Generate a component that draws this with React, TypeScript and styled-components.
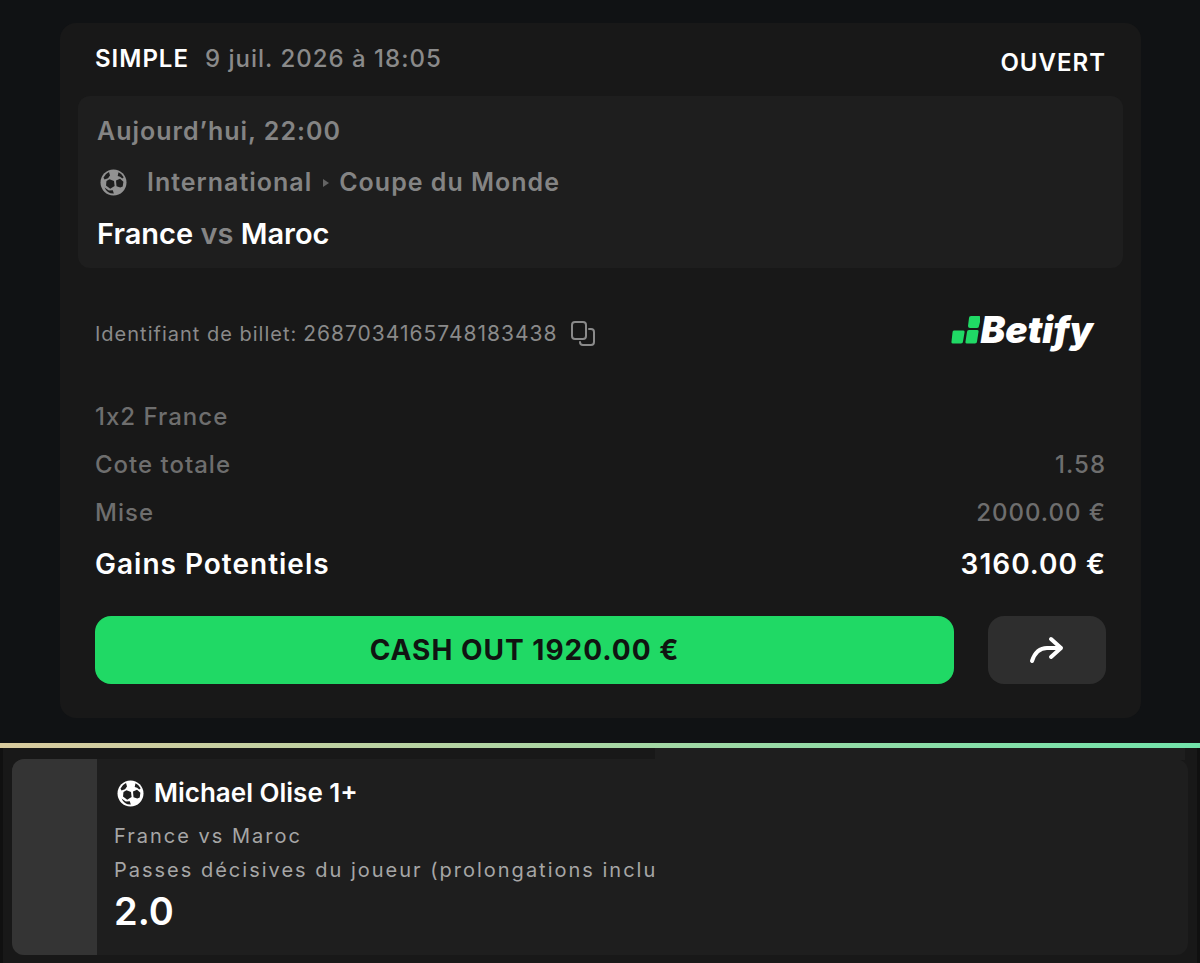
import React from 'react';
import styled, { createGlobalStyle } from 'styled-components';

const GlobalStyle = createGlobalStyle`
  *, *::before { box-sizing: border-box; }
  body {
    margin: 0;
    background: #101214;
    color: #fff;
    font-family: Inter, "Liberation Sans", sans-serif;
  }
  p, h2, dl, dd, dt { margin: 0; font-weight: inherit; }
  button { font-family: inherit; border: 0; padding: 0; cursor: pointer; }
`;

const Ticket = styled.article`
  margin: 23px 59px 25px 60px;
  padding: 18px 18px 34px;
  border-radius: 16px;
  background: #181818;
`;

const TicketHeader = styled.header`
  display: flex;
  justify-content: space-between;
  align-items: flex-end;
  padding: 0 17px;
  margin-bottom: 16px;
`;

const Heading = styled.div`
  display: flex;
  gap: 16px;
  padding-bottom: 4px;
`;

const Label = styled.p<{ $tone?: string; $weight?: number }>`
  display: flex;
  align-items: center;
  font-size: 24px;
  line-height: 35px;
  letter-spacing: 1px;
  font-weight: ${(p) => p.$weight ?? 500};
  color: ${(p) => p.$tone ?? '#8a8a8a'};
`;

const MatchPanel = styled.section`
  display: flex;
  flex-direction: column;
  gap: 16px;
  padding: 18px 19px 17px;
  border-radius: 12px;
  background: #1e1e1e;
`;

const MatchInfo = styled(Label)`
  font-size: 25px;
  font-weight: 600;
  color: #848484;
  svg { margin: 0 20px 0 3px; color: #929292; }
`;

const Chevron = styled.span`
  width: 0;
  margin: 0 10px 0 11px;
  border-left: 6px solid #646464;
  border-top: 4px solid transparent;
  border-bottom: 4px solid transparent;
`;

const Teams = styled.h2`
  font-size: 29px;
  line-height: 35px;
  font-weight: 600;
  span { color: #858585; }
`;

const Reference = styled.div`
  display: flex;
  justify-content: space-between;
  align-items: flex-end;
  margin: 40px 30px 49px 17px;
`;

const TicketId = styled.p`
  display: flex;
  align-items: center;
  gap: 6px;
  padding-bottom: 2px;
  font-size: 20px;
  line-height: 32px;
  letter-spacing: 1px;
  color: #8a8a8a;
`;

const TicketNumber = styled.span`
  font-size: 21px;
`;

const CopyButton = styled.button`
  display: flex;
  margin-left: 6px;
  background: none;
  color: #8a8a8a;
`;

const Brand = styled.div`
  display: flex;
  align-items: center;
  font: italic 900 37px/44px Inter, sans-serif;
`;

const Amounts = styled.dl`
  display: flex;
  flex-direction: column;
  gap: 16px;
  padding: 0 17px;
`;

const AmountRow = styled.div<{ $strong?: boolean }>`
  display: flex;
  justify-content: space-between;
  font-size: ${(p) => (p.$strong ? 28 : 24)}px;
  line-height: ${(p) => (p.$strong ? 38 : 32)}px;
  letter-spacing: 1px;
  font-weight: ${(p) => (p.$strong ? 600 : 500)};
  color: ${(p) => (p.$strong ? '#fff' : '#6e6e6e')};
`;

const Actions = styled.div`
  display: flex;
  gap: 34px;
  padding: 0 17px;
  margin-top: 33px;
`;

const CashOut = styled.button`
  flex: 1;
  height: 68px;
  border-radius: 16px;
  background: #20d965;
  color: #101411;
  font-size: 28px;
  letter-spacing: 1px;
  font-weight: 700;
`;

const Share = styled.button`
  display: flex;
  align-items: center;
  justify-content: center;
  width: 118px;
  border-radius: 16px;
  background: #2e2e2e;
  color: #fff;
`;

const Divider = styled.div`
  height: 5px;
  background: linear-gradient(90deg, #d9cb9f, #a8d6a4 50%, #72e4ab);
`;

const SelectionArea = styled.section`
  position: relative;
  padding: 11px 9px 8px;
  border: solid #101010;
  border-width: 0 3px;
  background: #181818;
  &::before {
    content: '';
    position: absolute;
    top: 0;
    left: 652px;
    right: 12px;
    height: 12px;
    background: #1e1e1e;
  }
`;

const Selection = styled.article`
  display: flex;
  border-radius: 12px;
  overflow: hidden;
  background: #1e1e1e;
`;

const Swatch = styled.div`
  width: 85px;
  background: #343434;
`;

const Pick = styled.div`
  padding: 16px 17px 20px;
`;

const Player = styled.h2`
  display: flex;
  align-items: center;
  gap: 10px;
  padding-left: 3px;
  margin-bottom: 8px;
  font-size: 26px;
  line-height: 36px;
  font-weight: 600;
`;

const Detail = styled.p`
  font-size: 20px;
  line-height: 34px;
  letter-spacing: 2px;
  color: #a6a6a6;
`;

const Odds = styled.p`
  font-size: 38px;
  line-height: 48px;
  font-weight: 600;
`;

const Ball = () => (
  <svg width="27" height="27" viewBox="0 0 27 27" aria-hidden="true">
    <circle cx="13.5" cy="13.5" r="13" fill="currentColor" />
    <g fill="#1e1e1e">
      <path d="M9.5 10.2 14 12l.6 5-4.4 2.8L6 16.5l.5-4.6z" />
      <path d="m16 11.6 4-1.8 3.4 3-.7 4.6-2.4 1-3.8-1.2z" />
      <path d="M3.5 8.5Q5.500 4.500 9 3l1 3.500-2 2.800L4.500 10.500z" />
      <path d="M18.500 3.200q3.500 1.500 5.200 5l-1.400 1.400-2.200-1.800-2.400-.8z" />
      <path d="m4.500 18.500 4.300 3 4-.2 1 3.200q-6.500.3-9.300-6z" />
    </g>
  </svg>
);

const CopyIcon = () => (
  <svg width="26" height="26" viewBox="0 0 26 26" fill="none" stroke="currentColor" strokeWidth="2" strokeLinecap="round" aria-hidden="true">
    <rect x="2" y="1" width="14" height="17" rx="3" />
    <path d="M19 8h2q3 0 3 3v10q0 3-3 3h-8q-3 0-3-3" />
  </svg>
);

const ShareIcon = () => (
  <svg width="36" height="28" viewBox="0 0 36 28" fill="none" stroke="currentColor" strokeWidth="4" strokeLinecap="round" strokeLinejoin="round" aria-hidden="true">
    <path d="M3 25C6 16 11 12 18 12h14M22 3l10 9-10 9" />
  </svg>
);

const BrandMark = () => (
  <svg width="29" height="28" viewBox="0 0 29 28" fill="#20d965" aria-hidden="true">
    <path d="M20 0h8q2 0 2 2l-2 8q0 2-2 2h-7q-2 0-2-2l1-8q0-2 2-2zM3 14.500h9q2 0 1.500 2l-1.500 9q0 2-2 2H2q-2 0-1.500-2l1-9q0-2 1.500-2zM18 14h8q2 0 1.500 2l-1.500 9.500q0 2-2 2h-8q-2 0-1.500-2l1.500-9.500q0-2 2-2z" />
  </svg>
);

export default function App() {
  return (
    <main>
      <GlobalStyle />
      <Ticket>
        <TicketHeader>
          <Heading>
            <Label $tone="#fff" $weight={600}>SIMPLE</Label>
            <Label>9 juil. 2026 à 18:05</Label>
          </Heading>
          <Label $tone="#fff" $weight={600}>OUVERT</Label>
        </TicketHeader>
        <MatchPanel>
          <MatchInfo>Aujourd’hui, 22:00</MatchInfo>
          <MatchInfo>
            <Ball />International<Chevron />Coupe du Monde
          </MatchInfo>
          <Teams>France <span>vs</span> Maroc</Teams>
        </MatchPanel>
        <Reference>
          <TicketId>
            Identifiant de billet: <TicketNumber>2687034165748183438</TicketNumber>
            <CopyButton aria-label="Copier"><CopyIcon /></CopyButton>
          </TicketId>
          <Brand><BrandMark />Betify</Brand>
        </Reference>
        <Amounts>
          <AmountRow><dt>1x2 France</dt></AmountRow>
          <AmountRow><dt>Cote totale</dt><dd>1.58</dd></AmountRow>
          <AmountRow><dt>Mise</dt><dd>2000.00 €</dd></AmountRow>
          <AmountRow $strong><dt>Gains Potentiels</dt><dd>3160.00 €</dd></AmountRow>
        </Amounts>
        <Actions>
          <CashOut>CASH OUT 1920.00 €</CashOut>
          <Share aria-label="Partager"><ShareIcon /></Share>
        </Actions>
      </Ticket>
      <Divider />
      <SelectionArea>
        <Selection>
          <Swatch />
          <Pick>
            <Player><Ball />Michael Olise 1+</Player>
            <Detail>France vs Maroc</Detail>
            <Detail>Passes décisives du joueur (prolongations inclu</Detail>
            <Odds>2.0</Odds>
          </Pick>
        </Selection>
      </SelectionArea>
    </main>
  );
}
